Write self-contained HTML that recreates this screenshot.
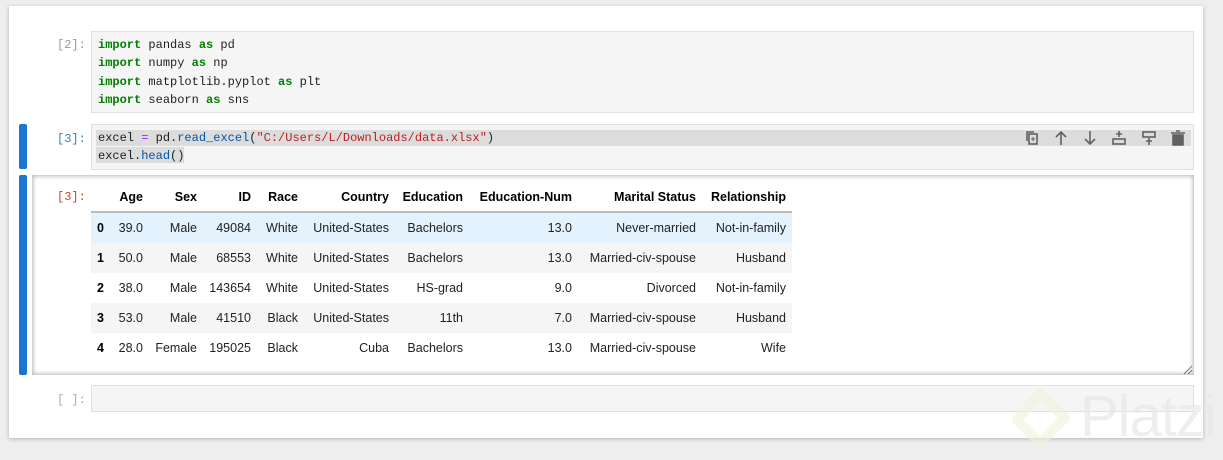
<!DOCTYPE html>
<html><head><meta charset="utf-8"><style>
body{margin:0;width:1223px;height:460px;background:#eeeeee;position:relative;overflow:hidden;font-family:"Liberation Sans",sans-serif;}
.abs{position:absolute}
.panel{left:9px;top:6px;width:1194px;height:432px;background:#fff;box-shadow:0 1px 4px rgba(0,0,0,.25)}
.code{background:#f5f5f5;border:1px solid #e0e0e0;box-sizing:border-box}
.mono{font-family:"Liberation Mono",monospace;font-size:12px;color:#212121;white-space:pre;line-height:18.3px}
.k{color:#008000;font-weight:bold}
.p{color:#aa22ff}
.f{color:#0055aa}
.s{color:#ba2121}
.prompt{font-family:"Liberation Mono",monospace;font-size:12px;color:#999;}
.bar{left:19px;width:8px;background:#1976d2;border-radius:2px}
.c{position:absolute;font-size:12.5px;color:#222;white-space:nowrap;text-align:right}
.h{font-weight:bold;color:#000}
</style></head><body>
<div class="abs panel"></div>
<div class="abs prompt" style="left:57px;top:38px">[2]:</div>
<div class="abs code" style="left:91px;top:31px;width:1103px;height:82px"></div>
<div class="abs mono" style="left:98px;top:36px"><span class="k">import</span> pandas <span class="k">as</span> pd
<span class="k">import</span> numpy <span class="k">as</span> np
<span class="k">import</span> matplotlib.pyplot <span class="k">as</span> plt
<span class="k">import</span> seaborn <span class="k">as</span> sns</div>

<div class="abs bar" style="top:124px;height:45px"></div>
<div class="abs prompt" style="left:57px;top:132px;color:#307fc1">[3]:</div>
<div class="abs code" style="left:91px;top:124px;width:1103px;height:46px"></div>
<div class="abs" style="left:96px;top:130px;width:1095px;height:16px;background:#dcdcdc"></div>
<div class="abs" style="left:96px;top:147px;width:88px;height:16px;background:#dcdcdc"></div>
<div class="abs mono" style="left:98px;top:129px">excel <span class="p">=</span> pd.<span class="f">read_excel</span>(<span class="s">"C:/Users/L/Downloads/data.xlsx"</span>)
excel.<span class="f">head</span>()</div>
<svg class="abs" style="left:1020px;top:128px" width="175" height="20" viewBox="0 0 175 20" fill="none" stroke="#616161" stroke-width="1.6">
<rect x="9" y="6" width="8" height="10"/><path d="M7 13V4h7"/><path d="M13 9v4M11 11h4" stroke-width="1"/>
<path d="M41 17V4M36 9l5-5 5 5"/>
<path d="M70 3v13M65 11l5 5 5-5"/>
<rect x="93" y="11" width="12" height="5"/><path d="M99 3v6M96 6h6"/>
<rect x="123" y="4" width="12" height="5"/><path d="M129 10v7M126 13h6"/>
<path d="M153 7h10v10h-10z" fill="#616161"/><path d="M151 5h14M156 3h4" />
</svg>

<div class="abs bar" style="top:175px;height:200px"></div>
<div class="abs" style="left:32px;top:175px;width:1162px;height:200px;background:#fff;box-shadow:inset 0 0 4px 1px rgba(0,0,0,.3)"></div>
<div class="abs prompt" style="left:57px;top:190px;color:#d84315">[3]:</div>
<div class="abs" style="left:91px;top:211px;width:701px;height:2px;background:#bdbdbd"></div>
<div class="abs" style="left:91px;top:213px;width:701px;height:30px;background:#e3f2fd"></div>
<div class="abs" style="left:91px;top:243px;width:701px;height:30px;background:#f5f5f5"></div>
<div class="abs" style="left:91px;top:303px;width:701px;height:30px;background:#f5f5f5"></div>
<div id="t"></div>
<script>
var R=[143,197,251,298,389,463,572,696,786];
var H=["Age","Sex","ID","Race","Country","Education","Education-Num","Marital Status","Relationship"];
var D=[["39.0","Male","49084","White","United-States","Bachelors","13.0","Never-married","Not-in-family"],
["50.0","Male","68553","White","United-States","Bachelors","13.0","Married-civ-spouse","Husband"],
["38.0","Male","143654","White","United-States","HS-grad","9.0","Divorced","Not-in-family"],
["53.0","Male","41510","Black","United-States","11th","7.0","Married-civ-spouse","Husband"],
["28.0","Female","195025","Black","Cuba","Bachelors","13.0","Married-civ-spouse","Wife"]];
var s="";
H.forEach(function(h,i){s+='<div class="c h" style="right:'+(1223-R[i])+'px;top:190px">'+h+'</div>';});
D.forEach(function(r,j){var y=221+30*j;s+='<div class="c h" style="left:97px;top:'+y+'px">'+j+'</div>';
r.forEach(function(v,i){s+='<div class="c" style="right:'+(1223-R[i])+'px;top:'+y+'px">'+v+'</div>';});});
document.getElementById("t").innerHTML=s;
</script>
<svg class="abs" style="left:1183px;top:365px" width="10" height="10"><path d="M1 9L9 1M5 9L9 5" stroke="#777" stroke-width="1"/></svg>

<div class="abs prompt" style="left:57px;top:393px;color:#aaa">[ ]:</div>
<div class="abs code" style="left:91px;top:385px;width:1103px;height:27px"></div>

<svg class="abs" style="left:1005px;top:385px;opacity:.6" width="70" height="75"><path d="M35 8 L60 33 L35 58 L12 35 Z" fill="none" stroke="#eef3dc" stroke-width="10" stroke-linejoin="round"/></svg>
<div class="abs" style="left:1080px;top:383px;font-size:58px;color:#e8e8e8;letter-spacing:-1px;opacity:.7">Platzi</div>
</body></html>
